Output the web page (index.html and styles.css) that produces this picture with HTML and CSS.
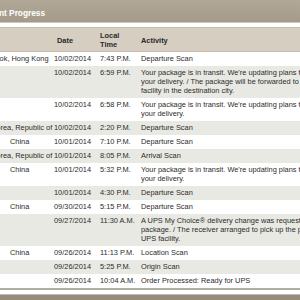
FILE: index.html
```html
<!DOCTYPE html>
<html>
<head>
<meta charset="utf-8">
<link rel="stylesheet" href="styles.css">
</head>
<body>
<div class="panel">
  <div class="bar">
    <span class="bar-title">Shipment Progress</span>
    <span class="bar-link">What's this?</span>
  </div>
  <table class="progress">
    <colgroup>
      <col class="c-loc"><col class="c-date"><col class="c-time"><col class="c-act">
    </colgroup>
    <thead>
      <tr>
        <th>Location</th>
        <th class="th-date">Date</th>
        <th>Local<br>Time</th>
        <th>Activity</th>
      </tr>
    </thead>
    <tbody>
      <tr><td>Chek Lap Kok, Hong Kong</td><td>10/02/2014</td><td>7:43 P.M.</td><td>Departure Scan</td></tr>
      <tr class="alt"><td></td><td>10/02/2014</td><td>6:59 P.M.</td><td>Your package is in transit. We're updating plans to schedule<br>your delivery. / The package will be forwarded to a UPS<br>facility in the destination city.</td></tr>
      <tr><td></td><td>10/02/2014</td><td>6:58 P.M.</td><td>Your package is in transit. We're updating plans to schedule<br>your delivery.</td></tr>
      <tr class="alt"><td>Incheon, Korea, Republic of</td><td>10/02/2014</td><td>2:20 P.M.</td><td>Departure Scan</td></tr>
      <tr><td class="loc-country">China</td><td>10/01/2014</td><td>7:10 P.M.</td><td>Departure Scan</td></tr>
      <tr class="alt"><td>Incheon, Korea, Republic of</td><td>10/01/2014</td><td>8:05 P.M.</td><td>Arrival Scan</td></tr>
      <tr><td class="loc-country">China</td><td>10/01/2014</td><td>5:32 P.M.</td><td>Your package is in transit. We're updating plans to schedule<br>your delivery.</td></tr>
      <tr class="alt"><td></td><td>10/01/2014</td><td>4:30 P.M.</td><td>Departure Scan</td></tr>
      <tr><td class="loc-country">China</td><td>09/30/2014</td><td>5:15 P.M.</td><td>Departure Scan</td></tr>
      <tr class="alt"><td></td><td>09/27/2014</td><td>11:30 A.M.</td><td>A UPS My Choice® delivery change was requested for this<br>package. / The receiver arranged to pick up the package at a<br>UPS facility.</td></tr>
      <tr><td class="loc-country">China</td><td>09/26/2014</td><td>11:13 P.M.</td><td>Location Scan</td></tr>
      <tr class="alt"><td></td><td>09/26/2014</td><td>5:25 P.M.</td><td>Origin Scan</td></tr>
      <tr class="last"><td></td><td>09/26/2014</td><td>10:04 A.M.</td><td>Order Processed: Ready for UPS</td></tr>
    </tbody>
  </table>
  <div class="foot-bar"></div>
</div>
</body>
</html>
```
FILE: styles.css
```css
html, body {
  margin: 0;
  padding: 0;
  background: #ffffff;
  overflow: hidden;
}
body {
  font-family: "Liberation Sans", Arial, Helvetica, sans-serif;
  color: #2b2b2b;
}
.panel {
  margin-left: -43px;
  width: 420px;
}
.bar {
  box-sizing: border-box;
  height: 23px;
  padding: 4px 27px 0 12px;
  display: flex;
  align-items: center;
  justify-content: space-between;
  background: linear-gradient(#b2a898, #a59a8a);
  border-bottom: 1px solid #cfc8bd;
  color: #ffffff;
  font-weight: bold;
  font-size: 8.3px;
  white-space: nowrap;
}
.progress {
  margin-top: 4px;
  width: 420px;
  table-layout: fixed;
  border-collapse: collapse;
  font-size: 7.4px;
  line-height: 9px;
}
.c-loc { width: 93px; }
.c-date { width: 46px; }
.c-time { width: 41px; }
.c-act { width: 240px; }
.progress th {
  background: #d6cec1;
  text-align: left;
  font-weight: bold;
  vertical-align: middle;
  padding: 3px 4px 2px;
  border-top: 1px solid #c5bdb0;
  border-bottom: 1px solid #c5bdb0;
  color: #2b2b2b;
  white-space: nowrap;
}
.progress th.th-date {
  padding-left: 7px;
}
.progress td {
  padding: 2px 4px 3px;
  vertical-align: top;
  white-space: nowrap;
}
.progress td.loc-country {
  padding-left: 53px;
}
.progress tr.alt td {
  background: #e9e9e3;
}
.progress tr.last td {
  border-bottom: 2px solid #b1ada5;
}
.foot-bar {
  margin-top: 4px;
  height: 12px;
  background: #998b7c;
  border-top: 1px solid #c2b9ac;
}
```
